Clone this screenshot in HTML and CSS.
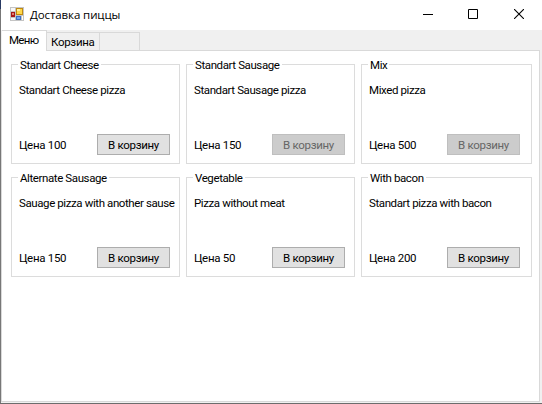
FILE: index.html
```html
<!DOCTYPE html>
<html lang="ru">
<head>
<meta charset="utf-8">
<title>Доставка пиццы</title>
<link rel="stylesheet" href="styles.css">
</head>
<body>
<div class="window">
  <header class="titlebar">
    <svg class="app-icon" width="14" height="14" viewBox="0 0 14 14" shape-rendering="crispEdges">
      <path fill="#c4c4c4" d="M0 0h14v14H0z"/>
      <path fill="#f8f8f8" d="M1 1h4v3H1zM1 11h4v2H1z"/>
      <path fill="#a81818" d="M1 5h4v5H1z"/><path fill="#e08070" d="M2 6h2v2H2z"/>
      <path fill="#c08a10" d="M6 1h7v7H6z"/><path fill="#ffd84c" d="M7 2h5v5H7z"/><path fill="#fff0a0" d="M7 2h3v2H7z"/>
      <path fill="#3d70c4" d="M6 9h5v4H6z"/><path fill="#78a8f0" d="M7 10h3v2H7z"/>
      <path fill="#fff" d="M12 9h1v4h-1z"/>
    </svg>
    <h1 class="title">Доставка пиццы</h1>
    <div class="controls">
      <svg width="10" height="10" viewBox="0 0 10 10"><path d="M0 5.5h10" stroke="#000"/></svg>
      <svg width="10" height="10" viewBox="0 0 10 10"><path d="M.5.5h9v9h-9z" fill="none" stroke="#000"/></svg>
      <svg class="close" width="10" height="10" viewBox="0 0 10 10"><path d="M0 0l10 10M10 0L0 10" stroke="#000" stroke-width="1.1"/></svg>
    </div>
  </header>
  <nav class="tabs">
    <div class="tab active">Меню</div>
    <div class="tab cart">Корзина</div>
    <div class="tab empty"></div>
  </nav>
  <main class="page">
    <fieldset class="card"><legend>Standart Cheese</legend><p>Standart Cheese pizza</p><div class="row"><span>Цена 100</span><button>В корзину</button></div></fieldset>
    <fieldset class="card"><legend>Standart Sausage</legend><p>Standart Sausage pizza</p><div class="row"><span>Цена 150</span><button disabled>В корзину</button></div></fieldset>
    <fieldset class="card"><legend>Mix</legend><p>Mixed pizza</p><div class="row"><span>Цена 500</span><button disabled>В корзину</button></div></fieldset>
    <fieldset class="card"><legend>Alternate Sausage</legend><p>Sauage pizza with another sause</p><div class="row"><span>Цена 150</span><button>В корзину</button></div></fieldset>
    <fieldset class="card"><legend>Vegetable</legend><p>Pizza without meat</p><div class="row"><span>Цена 50</span><button>В корзину</button></div></fieldset>
    <fieldset class="card"><legend>With bacon</legend><p>Standart pizza with bacon</p><div class="row"><span>Цена 200</span><button>В корзину</button></div></fieldset>
  </main>
</div>
</body>
</html>
```
FILE: styles.css
```css
* { box-sizing: border-box; }
body { margin: 0; overflow: hidden; }
.window {
  width: 542px;
  height: 404px;
  display: flex;
  flex-direction: column;
  background: linear-gradient(#283a63 9px, #777 9px) 0 0 / 1px 100% no-repeat, #f0f0f0;
  padding-left: 1px;
  border-bottom: 1px solid #6c6c6c;
  font: 11.5px/14px Roboto, "Liberation Sans", sans-serif;
  letter-spacing: -0.4px;
  color: #000;
}
.titlebar {
  flex: 0 0 30px;
  display: flex;
  background: #fff;
  padding-left: 9px;
}
.app-icon { margin-top: 7px; }
.title {
  margin: 7px 0 0 6px;
  font: 11.5px/16px "Open Sans", "Noto Sans", sans-serif;
  letter-spacing: -0.1px;
}
.controls { margin: 9px 18px 0 auto; display: flex; gap: 35px; }
.controls svg { display: block; }
.controls .close { margin-left: 1px; }
.tabs { flex: 0 0 20px; display: flex; align-items: flex-end; padding-left: 1px; letter-spacing: -0.3px; }
.tab {
  height: 18px;
  border: 1px solid #d9d9d9;
  border-left: 0;
  border-bottom: 0;
  line-height: 19px;
}
.active {
  width: 45px;
  height: 21px;
  margin-bottom: -1px;
  padding-left: 7px;
  background: #fff;
  position: relative;
  letter-spacing: -0.7px;
}
.cart { width: 53px; padding-left: 4px; }
.empty { width: 40px; }
.page {
  flex: 1;
  display: grid;
  grid-template-columns: 169px 169px 171px;
  grid-template-rows: 107px 107px;
  column-gap: 6px;
  row-gap: 6px;
  padding: 6px 0 0 9px;
  margin: 0 2px 1px 0;
  background: #fff;
  border: 1px solid #d9d9d9;
}
.card {
  min-width: 0;
  margin: 0;
  padding: 0 0 0 7px;
  border: 1px solid #dcdcdc;
}
.card legend { height: 14px; margin-left: -1px; padding: 0 2px; line-height: 16px; white-space: nowrap; }
.card p { height: 14px; margin: 12px 0 37px; white-space: nowrap; }
.row { display: flex; letter-spacing: -0.3px; }
.row span { width: 78px; padding-top: 4px; }
.row button {
  width: 73px;
  height: 21px;
  padding: 1px 0 0;
  border: 1px solid #adadad;
  background: #e1e1e1;
  color: #000;
  font: inherit;
  letter-spacing: inherit;
}
.row button:disabled { background: #ccc; border-color: #bfbfbf; color: #666; }
```
